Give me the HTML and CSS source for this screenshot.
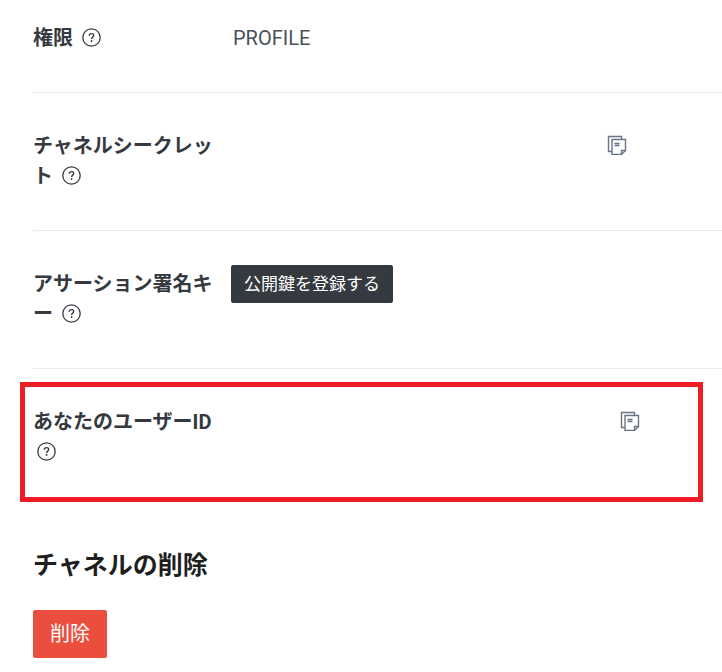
FILE: index.html
```html
<!DOCTYPE html>
<html lang="ja">
<head>
  <meta charset="UTF-8" />
  <meta name="viewport" content="width=device-width, initial-scale=1.0" />
  <title>チャネル基本設定</title>
  <link rel="stylesheet" href="styles.css">
</head>
<body>
  <svg class="sprite" aria-hidden="true">
    <symbol id="icon-help" viewBox="0 0 19 19">
      <circle cx="9.5" cy="9.5" r="8.7" fill="none" stroke="currentColor" stroke-width="1.3" />
      <path d="M7.3 7.7c0-1.3.9-2.1 2.2-2.1s2.2.8 2.2 1.9c0 1.6-2.1 1.7-2.1 3.4" fill="none" stroke="currentColor" stroke-width="1.4" />
      <circle cx="9.6" cy="13" r=".9" fill="currentColor" />
    </symbol>
    <symbol id="icon-copy" viewBox="0 0 20 20">
      <path d="M5 16.5H1.5v-15h13V4" fill="none" stroke="currentColor" stroke-width="1.4" />
      <path d="M5 4.5h13.5v11l-4 4H5z" fill="none" stroke="currentColor" stroke-width="1.4" />
      <path d="M18.5 15.5h-4v4" fill="none" stroke="currentColor" stroke-width="1.4" />
      <path d="M7.5 8.5h5M7.5 10.5h5" fill="none" stroke="currentColor" stroke-width="1.3" />
    </symbol>
  </svg>

  <main>
    <section class="row">
      <h3>権限 <button type="button" class="help" aria-label="ヘルプ"><svg><use href="#icon-help" /></svg></button></h3>
      <div class="value">PROFILE</div>
    </section>
    <section class="row secret">
      <h3>チャネルシークレット <button type="button" class="help" aria-label="ヘルプ"><svg><use href="#icon-help" /></svg></button></h3>
      <div class="value"></div>
      <button type="button" class="copy" aria-label="コピー"><svg><use href="#icon-copy" /></svg></button>
    </section>
    <section class="row">
      <h3>アサーション署名キー <button type="button" class="help" aria-label="ヘルプ"><svg><use href="#icon-help" /></svg></button></h3>
      <div class="value"><button type="button" class="btn-dark">公開鍵を登録する</button></div>
    </section>
    <section class="row user-id">
      <h3>あなたのユーザーID <button type="button" class="help" aria-label="ヘルプ"><svg><use href="#icon-help" /></svg></button></h3>
      <div class="value"></div>
      <button type="button" class="copy" aria-label="コピー"><svg><use href="#icon-copy" /></svg></button>
      <div class="highlight"></div>
    </section>
    <section class="delete">
      <h2>チャネルの削除</h2>
      <button type="button" class="btn-red">削除</button>
    </section>
  </main>
</body>
</html>
```

FILE: styles.css
```css
* {
  box-sizing: border-box;
}
body {
  margin: 0;
  background-color: #fff;
  color: #353a40;
  font-family: Roboto, "Noto Sans CJK JP", sans-serif;
  font-size: 20px;
  line-height: 30px;
}
main {
  padding-left: 33px;
}
h2, h3 {
  margin: 0;
}
h3 {
  font-size: 20px;
  font-weight: bold;
  word-break: break-all;
}
button {
  padding: 0;
  border: none;
  background: none;
  color: inherit;
  font: inherit;
  cursor: pointer;
}
svg {
  display: block;
  width: 20px;
  height: 20px;
}
.sprite {
  position: absolute;
  width: 0;
  height: 0;
}
.row {
  display: grid;
  grid-template-columns: 180px 1fr auto;
  column-gap: 20px;
  align-items: start;
  padding: 38px 0 39px;
  border-bottom: 1px solid #eaebed;
}
.row:first-child {
  padding-top: 23px;
}
.value {
  color: #485059;
}
.help {
  margin-left: 4px;
  vertical-align: -2px;
}
.help svg {
  width: 19px;
  height: 19px;
}
.copy {
  padding: 4px 0;
  color: #697586;
}
.secret {
  padding-right: 95px;
}
.user-id {
  position: relative;
  padding-right: 82px;
  padding-bottom: 35px;
  border-bottom: none;
}
/* red frame around the user ID row */
.highlight {
  position: absolute;
  top: 13px;
  right: 19px;
  bottom: 0;
  left: -13px;
  border: 5px solid #ee1c25;
  pointer-events: none;
}
.btn-dark, .btn-red {
  display: block;
  border-radius: 2px;
  color: #fff;
}
.btn-dark {
  margin: -4px 0 -4px -2px;
  padding: 4px 13px;
  background-color: #353a40;
  font-size: 17px;
}
.btn-red {
  padding: 9px 17px;
  background-color: #eb4e3d;
}
.delete {
  padding: 49px 0 14px;
}
h2 {
  margin-bottom: 29px;
  color: #1f1f1f;
  font-size: 25px;
}
```
